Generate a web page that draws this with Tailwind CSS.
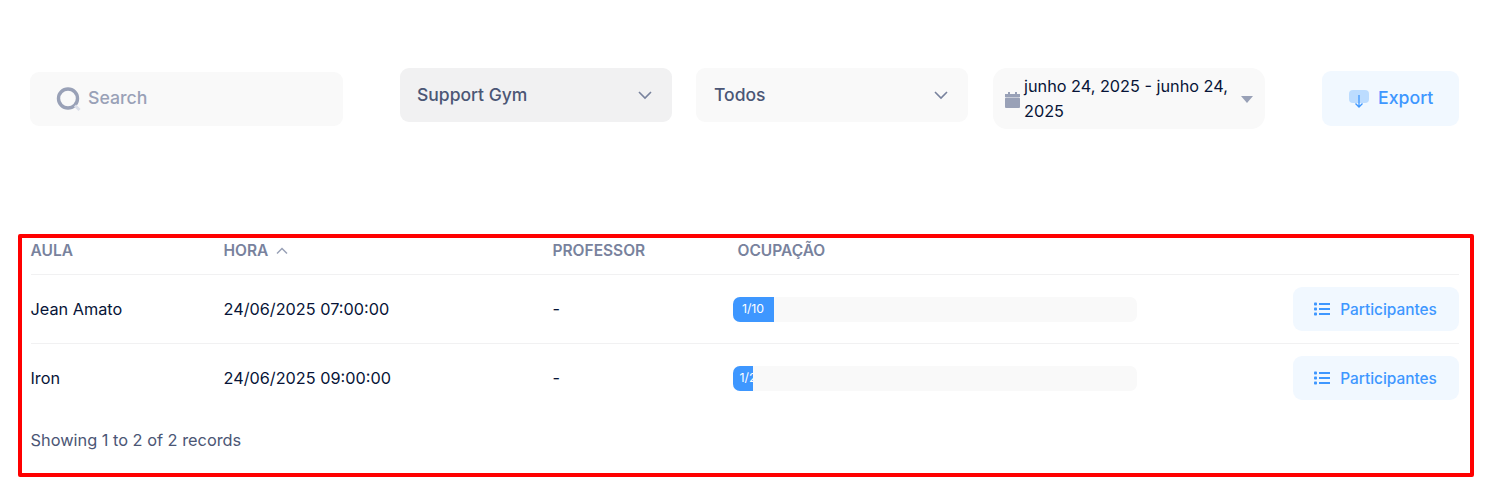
<!DOCTYPE html>
<html lang="pt">
<head>
    <meta charset="UTF-8">
    <meta name="viewport" content="width=device-width, initial-scale=1.0">
    <title>Aulas</title>
    <script src="https://cdn.jsdelivr.net/npm/@tailwindcss/browser@4"></script>
</head>
<body class="bg-white h-[496px] overflow-hidden font-['Inter','Liberation_Sans',sans-serif]">
    <!-- filtros -->
    <div class="flex items-start h-[234px] pt-[68px] pl-[30px]">
        <div class="flex items-center w-[313px] h-[54px] mt-[4px] pl-[26px] bg-[#f9f9f9] rounded-[9px]">
            <svg class="w-[25px] h-[25px]" viewBox="0 0 25 25" fill="none">
                <circle cx="12" cy="11.500" r="9.500" stroke="#99a1b7" stroke-width="3.400"/>
                <path d="M19 18.500l4.500 4.500" stroke="#dbdfe9" stroke-width="3"/>
            </svg>
            <span class="ml-[7px] mb-[2px] text-[17.7px] font-medium text-[#99a1b7]">Search</span>
        </div>

        <div class="flex items-center justify-between w-[272px] h-[54px] ml-[57px] pl-[17px] pr-[19px] bg-[#f1f1f2] rounded-[9px]">
            <span class="text-[17.5px] font-medium text-[#4b5675]">Support Gym</span>
            <svg class="w-[16px] h-[10px]" viewBox="0 0 16 10" fill="none"><path d="M2 2l6 6 6-6" stroke="#78829d" stroke-width="1.600"/></svg>
        </div>

        <div class="flex items-center justify-between w-[272px] h-[54px] ml-[24px] pl-[18px] pr-[19px] bg-[#f9f9f9] rounded-[9px]">
            <span class="text-[17.5px] font-medium text-[#4b5675]">Todos</span>
            <svg class="w-[16px] h-[10px]" viewBox="0 0 16 10" fill="none"><path d="M2 2l6 6 6-6" stroke="#78829d" stroke-width="1.600"/></svg>
        </div>

        <div class="flex items-center w-[272px] h-[61px] ml-[25px] pl-[12px] pr-[11px] bg-[#f9f9f9] rounded-[14px]">
            <svg class="w-[15px] h-[16px] shrink-0 mt-[3px]" viewBox="0 0 15 16" fill="#99a1b7">
                <path d="M3 0h2v2h5V0h2v2h3v3H0V2h3z"/>
                <rect y="5.500" width="15" height="10.500" rx="1"/>
            </svg>
            <span class="w-[216px] ml-[4px] text-[16.25px] leading-[25px] text-[#071437]">junho 24, 2025 - junho 24, 2025</span>
            <svg class="w-[12px] h-[7px] ml-[1px] mt-[2px] shrink-0" viewBox="0 0 12 7" fill="#99a1b7"><path d="M0 0h12L6 7z"/></svg>
        </div>

        <div class="flex items-center w-[137px] h-[55px] mt-[3px] ml-[57px] pl-[27px] bg-[#f1f8ff] rounded-[9px]">
            <svg class="w-[20px] h-[20px]" viewBox="0 0 20 20" fill="none">
                <rect y="1" width="20" height="13" rx="4" fill="#bcdcff"/>
                <path d="M10 6v12M6.500 14.500L10 18l3.500-3.500" stroke="#3e97ff" stroke-width="1.300"/>
            </svg>
            <span class="ml-[9px] text-[17.7px] font-medium text-[#3e97ff]">Export</span>
        </div>
    </div>

    <!-- tabela -->
    <div class="w-[1456px] h-[243px] ml-[18px] border-[4px] border-[#ff0000] rounded-[2px] pl-[8.500px] pr-[11px]">
        <div class="flex items-start h-[37px] pt-[1px] border-b border-[#f1f1f2] text-[15.500px] leading-[24px] font-semibold text-[#78829d]">
            <div class="w-[193px]">AULA</div>
            <div class="flex items-center w-[329px]">
                HORA
                <svg class="w-[12px] h-[8px] ml-[8px]" viewBox="0 0 12 8" fill="none"><path d="M1 6.500l5-5 5 5" stroke="#99a1b7" stroke-width="1.500"/></svg>
            </div>
            <div class="w-[185px]">PROFESSOR</div>
            <div>OCUPAÇÃO</div>
        </div>

        <div class="flex items-center h-[69px] border-b border-[#f1f1f2] text-[16.250px] text-[#071437]">
            <div class="w-[193px]">Jean Amato</div>
            <div class="w-[329px]">24/06/2025 07:00:00</div>
            <div class="w-[180px]">-</div>
            <div class="w-[404px] h-[25px] bg-[#f9f9f9] rounded-[7px] overflow-hidden">
                <div class="flex items-center justify-center pt-[1px] w-[41px] h-full bg-[#3e97ff] text-white text-[12.300px] overflow-hidden">1/10</div>
            </div>
            <div class="flex items-center justify-center w-[166px] h-[44px] ml-[156px] bg-[#f1f8ff] rounded-[9px] text-[#3e97ff] text-[15.400px] font-medium">
                <svg class="w-[16px] h-[14px] mr-[10px]" viewBox="0 0 16 14" fill="#3e97ff">
                    <rect y="0.500" width="3" height="3" rx="0.800"/><rect y="5.500" width="3" height="3" rx="0.800"/><rect y="10.500" width="3" height="3" rx="0.800"/>
                    <rect x="5" y="1" width="11" height="2"/><rect x="5" y="6" width="11" height="2"/><rect x="5" y="11" width="11" height="2"/>
                </svg>
                <span class="mt-[1px]">Participantes</span>
            </div>
        </div>

        <div class="flex items-center h-[69px] border-b border-transparent text-[16.250px] text-[#071437]">
            <div class="w-[193px]">Iron</div>
            <div class="w-[329px]">24/06/2025 09:00:00</div>
            <div class="w-[180px]">-</div>
            <div class="w-[404px] h-[25px] bg-[#f9f9f9] rounded-[7px] overflow-hidden">
                <div class="flex items-center pl-[7px] pt-[1px] w-[20px] h-full bg-[#3e97ff] text-white text-[12.300px] overflow-hidden whitespace-nowrap">1/20</div>
            </div>
            <div class="flex items-center justify-center w-[166px] h-[44px] ml-[156px] bg-[#f1f8ff] rounded-[9px] text-[#3e97ff] text-[15.400px] font-medium">
                <svg class="w-[16px] h-[14px] mr-[10px]" viewBox="0 0 16 14" fill="#3e97ff">
                    <rect y="0.500" width="3" height="3" rx="0.800"/><rect y="5.500" width="3" height="3" rx="0.800"/><rect y="10.500" width="3" height="3" rx="0.800"/>
                    <rect x="5" y="1" width="11" height="2"/><rect x="5" y="6" width="11" height="2"/><rect x="5" y="11" width="11" height="2"/>
                </svg>
                <span class="mt-[1px]">Participantes</span>
            </div>
        </div>

        <div class="mt-[15px] text-[16.350px] leading-[24px] text-[#4b5675]">Showing 1 to 2 of 2 records</div>
    </div>
</body>
</html>
